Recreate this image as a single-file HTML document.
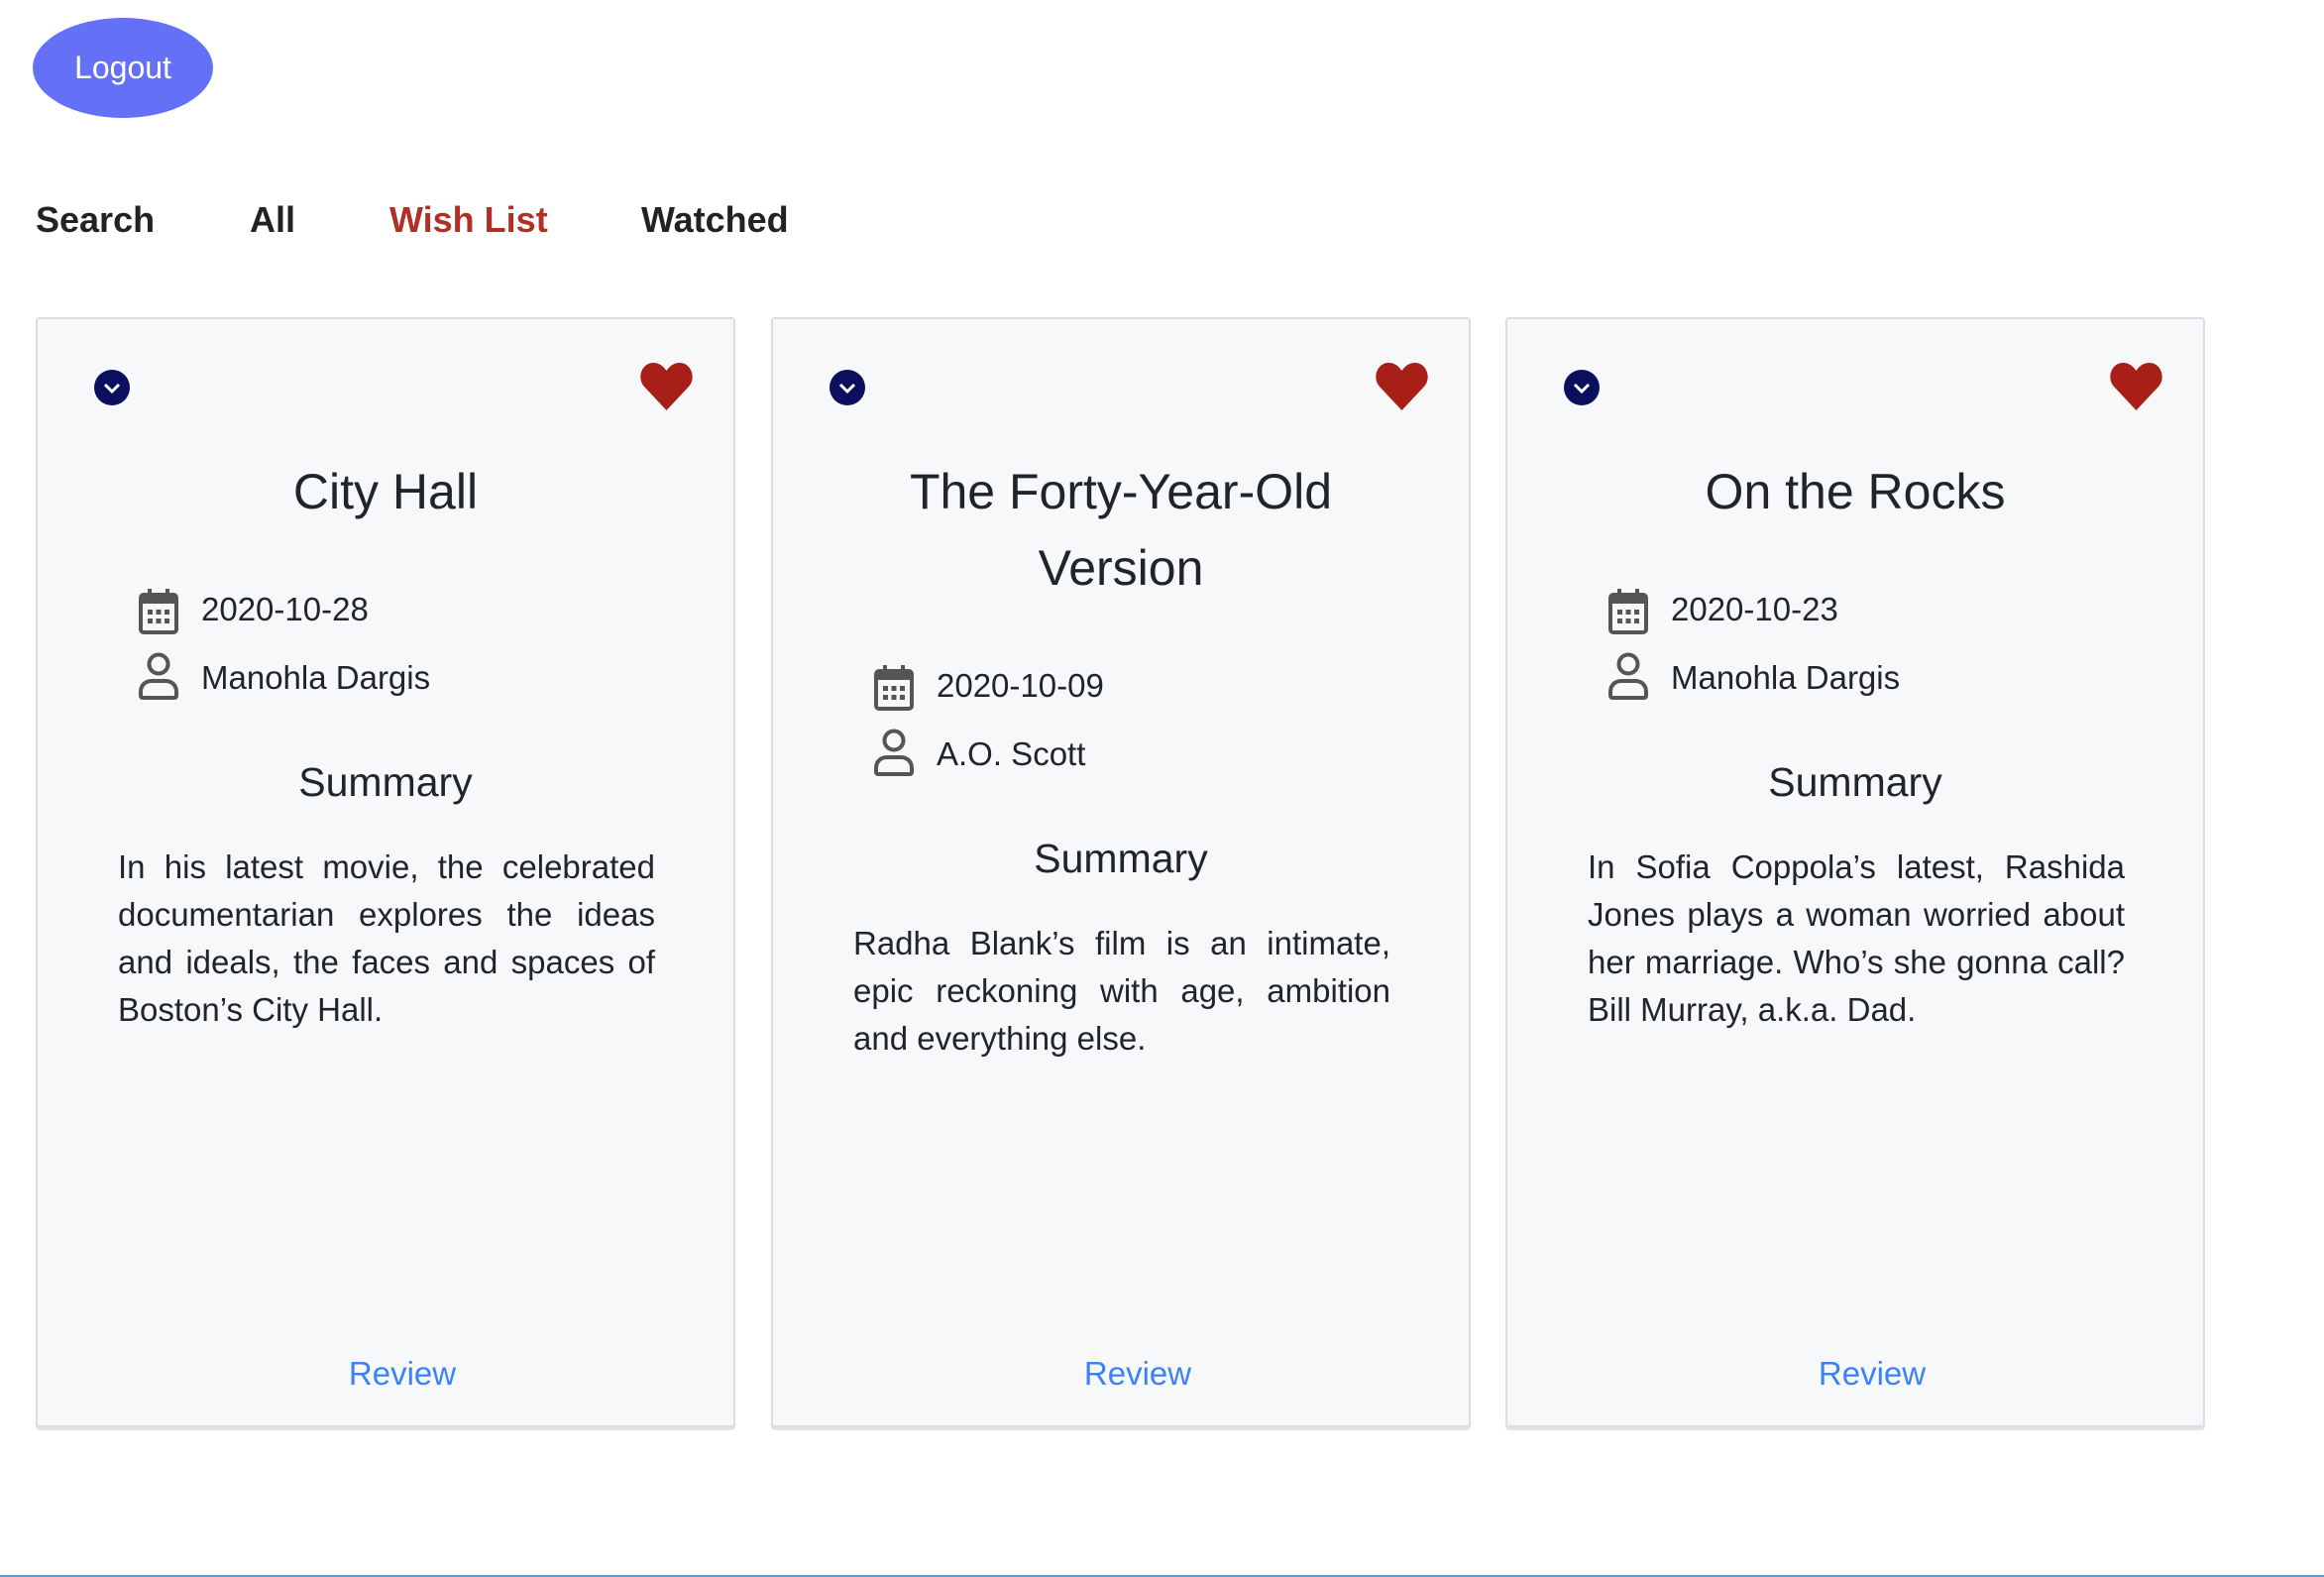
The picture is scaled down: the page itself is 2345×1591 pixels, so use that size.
<!DOCTYPE html>
<html><head><meta charset="utf-8"><style>
*{margin:0;padding:0;box-sizing:border-box}
body{width:2345px;height:1591px;background:#fff;font-family:"Liberation Sans",sans-serif;color:#212529;position:relative;overflow:hidden}
.abs{position:absolute}
.logout{left:33px;top:18px;width:182px;height:101px;border-radius:50%;background:#6470f5;color:#fff;font-size:32px;text-align:center;line-height:101px}
.nav{top:201px;font-size:36px;font-weight:bold;color:#222}
.card{top:320px;width:706px;height:1120px;background:#f7f8fa;border:2px solid #dcdde0;border-radius:4px;box-shadow:0 3px 0 #e2e3e6}
.chev{left:56px;top:50px}
.heart{left:607px;top:43px}
.title{left:0;width:100%;text-align:center;font-size:50px;line-height:77px}
.row{font-size:33px;line-height:40px}
.sum{width:100%;text-align:center;font-size:41px}
.p{width:542px;left:81px;font-size:33px;line-height:48px;text-align:justify}
.rev{width:100%;text-align:center;left:17px;font-size:33px;color:#3b82f6;top:1045px}
</style></head><body>
<div class="abs logout">Logout</div>
<div class="abs nav" style="left:36px">Search</div>
<div class="abs nav" style="left:252px">All</div>
<div class="abs nav" style="left:393px;color:#b03025">Wish List</div>
<div class="abs nav" style="left:647px">Watched</div>

<div class="abs card" style="left:36px">
 <svg class="abs chev" width="38" height="38" viewBox="0 0 38 38"><circle cx="19" cy="19" r="18" fill="#0b0f5e"/><path d="M12 16l7 7 7-7" stroke="#fff" stroke-width="3" fill="none"/></svg>
 <svg class="abs heart" width="55" height="50" viewBox="0 0 55 50"><path d="M27.5 49L5 25C-3 16 3 1 14 1c6 0 10 3 13.5 8C31 4 35 1 41 1c11 0 17 15 9 24z" fill="#a71f17"/></svg>
 <div class="abs title" style="top:136px">City Hall</div>
 <svg class="abs" style="left:102px;top:272px" width="40" height="46" viewBox="0 0 40 46"><rect x="2" y="6" width="36" height="38" rx="3" fill="none" stroke="#555" stroke-width="4"/><rect x="2" y="6" width="36" height="9" fill="#555"/><rect x="9" y="0" width="4" height="9" fill="#555"/><rect x="27" y="0" width="4" height="9" fill="#555"/><g fill="#555"><rect x="9" y="21" width="5" height="5"/><rect x="17.5" y="21" width="5" height="5"/><rect x="26" y="21" width="5" height="5"/><rect x="9" y="30" width="5" height="5"/><rect x="17.5" y="30" width="5" height="5"/><rect x="26" y="30" width="5" height="5"/></g></svg>
 <div class="abs row" style="left:165px;top:273px">2020-10-28</div>
 <svg class="abs" style="left:102px;top:336px" width="40" height="50" viewBox="0 0 40 50"><circle cx="20" cy="12" r="9.5" fill="none" stroke="#555" stroke-width="4"/><path d="M4 46h32a2 2 0 0 0 2-2v-4c0-7-5-11-11-11H13C7 29 2 33 2 40v4a2 2 0 0 0 2 2z" fill="none" stroke="#555" stroke-width="4"/></svg>
 <div class="abs row" style="left:165px;top:342px">Manohla Dargis</div>
 <div class="abs sum" style="top:444px">Summary</div>
 <div class="abs p" style="top:529px">In his latest movie, the celebrated documentarian explores the ideas and ideals, the faces and spaces of Boston’s City Hall.</div>
 <div class="abs rev">Review</div>
</div>

<div class="abs card" style="left:778px">
 <svg class="abs chev" width="38" height="38" viewBox="0 0 38 38"><circle cx="19" cy="19" r="18" fill="#0b0f5e"/><path d="M12 16l7 7 7-7" stroke="#fff" stroke-width="3" fill="none"/></svg>
 <svg class="abs heart" width="55" height="50" viewBox="0 0 55 50"><path d="M27.5 49L5 25C-3 16 3 1 14 1c6 0 10 3 13.5 8C31 4 35 1 41 1c11 0 17 15 9 24z" fill="#a71f17"/></svg>
 <div class="abs title" style="top:136px;padding:0 60px">The Forty-Year-Old Version</div>
 <svg class="abs" style="left:102px;top:349px" width="40" height="46" viewBox="0 0 40 46"><rect x="2" y="6" width="36" height="38" rx="3" fill="none" stroke="#555" stroke-width="4"/><rect x="2" y="6" width="36" height="9" fill="#555"/><rect x="9" y="0" width="4" height="9" fill="#555"/><rect x="27" y="0" width="4" height="9" fill="#555"/><g fill="#555"><rect x="9" y="21" width="5" height="5"/><rect x="17.5" y="21" width="5" height="5"/><rect x="26" y="21" width="5" height="5"/><rect x="9" y="30" width="5" height="5"/><rect x="17.5" y="30" width="5" height="5"/><rect x="26" y="30" width="5" height="5"/></g></svg>
 <div class="abs row" style="left:165px;top:350px">2020-10-09</div>
 <svg class="abs" style="left:102px;top:413px" width="40" height="50" viewBox="0 0 40 50"><circle cx="20" cy="12" r="9.5" fill="none" stroke="#555" stroke-width="4"/><path d="M4 46h32a2 2 0 0 0 2-2v-4c0-7-5-11-11-11H13C7 29 2 33 2 40v4a2 2 0 0 0 2 2z" fill="none" stroke="#555" stroke-width="4"/></svg>
 <div class="abs row" style="left:165px;top:419px">A.O. Scott</div>
 <div class="abs sum" style="top:521px">Summary</div>
 <div class="abs p" style="top:606px">Radha Blank’s film is an intimate, epic reckoning with age, ambition and everything else.</div>
 <div class="abs rev">Review</div>
</div>

<div class="abs card" style="left:1519px">
 <svg class="abs chev" width="38" height="38" viewBox="0 0 38 38"><circle cx="19" cy="19" r="18" fill="#0b0f5e"/><path d="M12 16l7 7 7-7" stroke="#fff" stroke-width="3" fill="none"/></svg>
 <svg class="abs heart" width="55" height="50" viewBox="0 0 55 50"><path d="M27.5 49L5 25C-3 16 3 1 14 1c6 0 10 3 13.5 8C31 4 35 1 41 1c11 0 17 15 9 24z" fill="#a71f17"/></svg>
 <div class="abs title" style="top:136px">On the Rocks</div>
 <svg class="abs" style="left:102px;top:272px" width="40" height="46" viewBox="0 0 40 46"><rect x="2" y="6" width="36" height="38" rx="3" fill="none" stroke="#555" stroke-width="4"/><rect x="2" y="6" width="36" height="9" fill="#555"/><rect x="9" y="0" width="4" height="9" fill="#555"/><rect x="27" y="0" width="4" height="9" fill="#555"/><g fill="#555"><rect x="9" y="21" width="5" height="5"/><rect x="17.5" y="21" width="5" height="5"/><rect x="26" y="21" width="5" height="5"/><rect x="9" y="30" width="5" height="5"/><rect x="17.5" y="30" width="5" height="5"/><rect x="26" y="30" width="5" height="5"/></g></svg>
 <div class="abs row" style="left:165px;top:273px">2020-10-23</div>
 <svg class="abs" style="left:102px;top:336px" width="40" height="50" viewBox="0 0 40 50"><circle cx="20" cy="12" r="9.5" fill="none" stroke="#555" stroke-width="4"/><path d="M4 46h32a2 2 0 0 0 2-2v-4c0-7-5-11-11-11H13C7 29 2 33 2 40v4a2 2 0 0 0 2 2z" fill="none" stroke="#555" stroke-width="4"/></svg>
 <div class="abs row" style="left:165px;top:342px">Manohla Dargis</div>
 <div class="abs sum" style="top:444px">Summary</div>
 <div class="abs p" style="top:529px">In Sofia Coppola’s latest, Rashida Jones plays a woman worried about her marriage. Who’s she gonna call? Bill Murray, a.k.a. Dad.</div>
 <div class="abs rev">Review</div>
</div>

<div class="abs" style="left:0;top:1589px;width:2345px;height:2px;background:#3fa0f2"></div>
</body></html>
